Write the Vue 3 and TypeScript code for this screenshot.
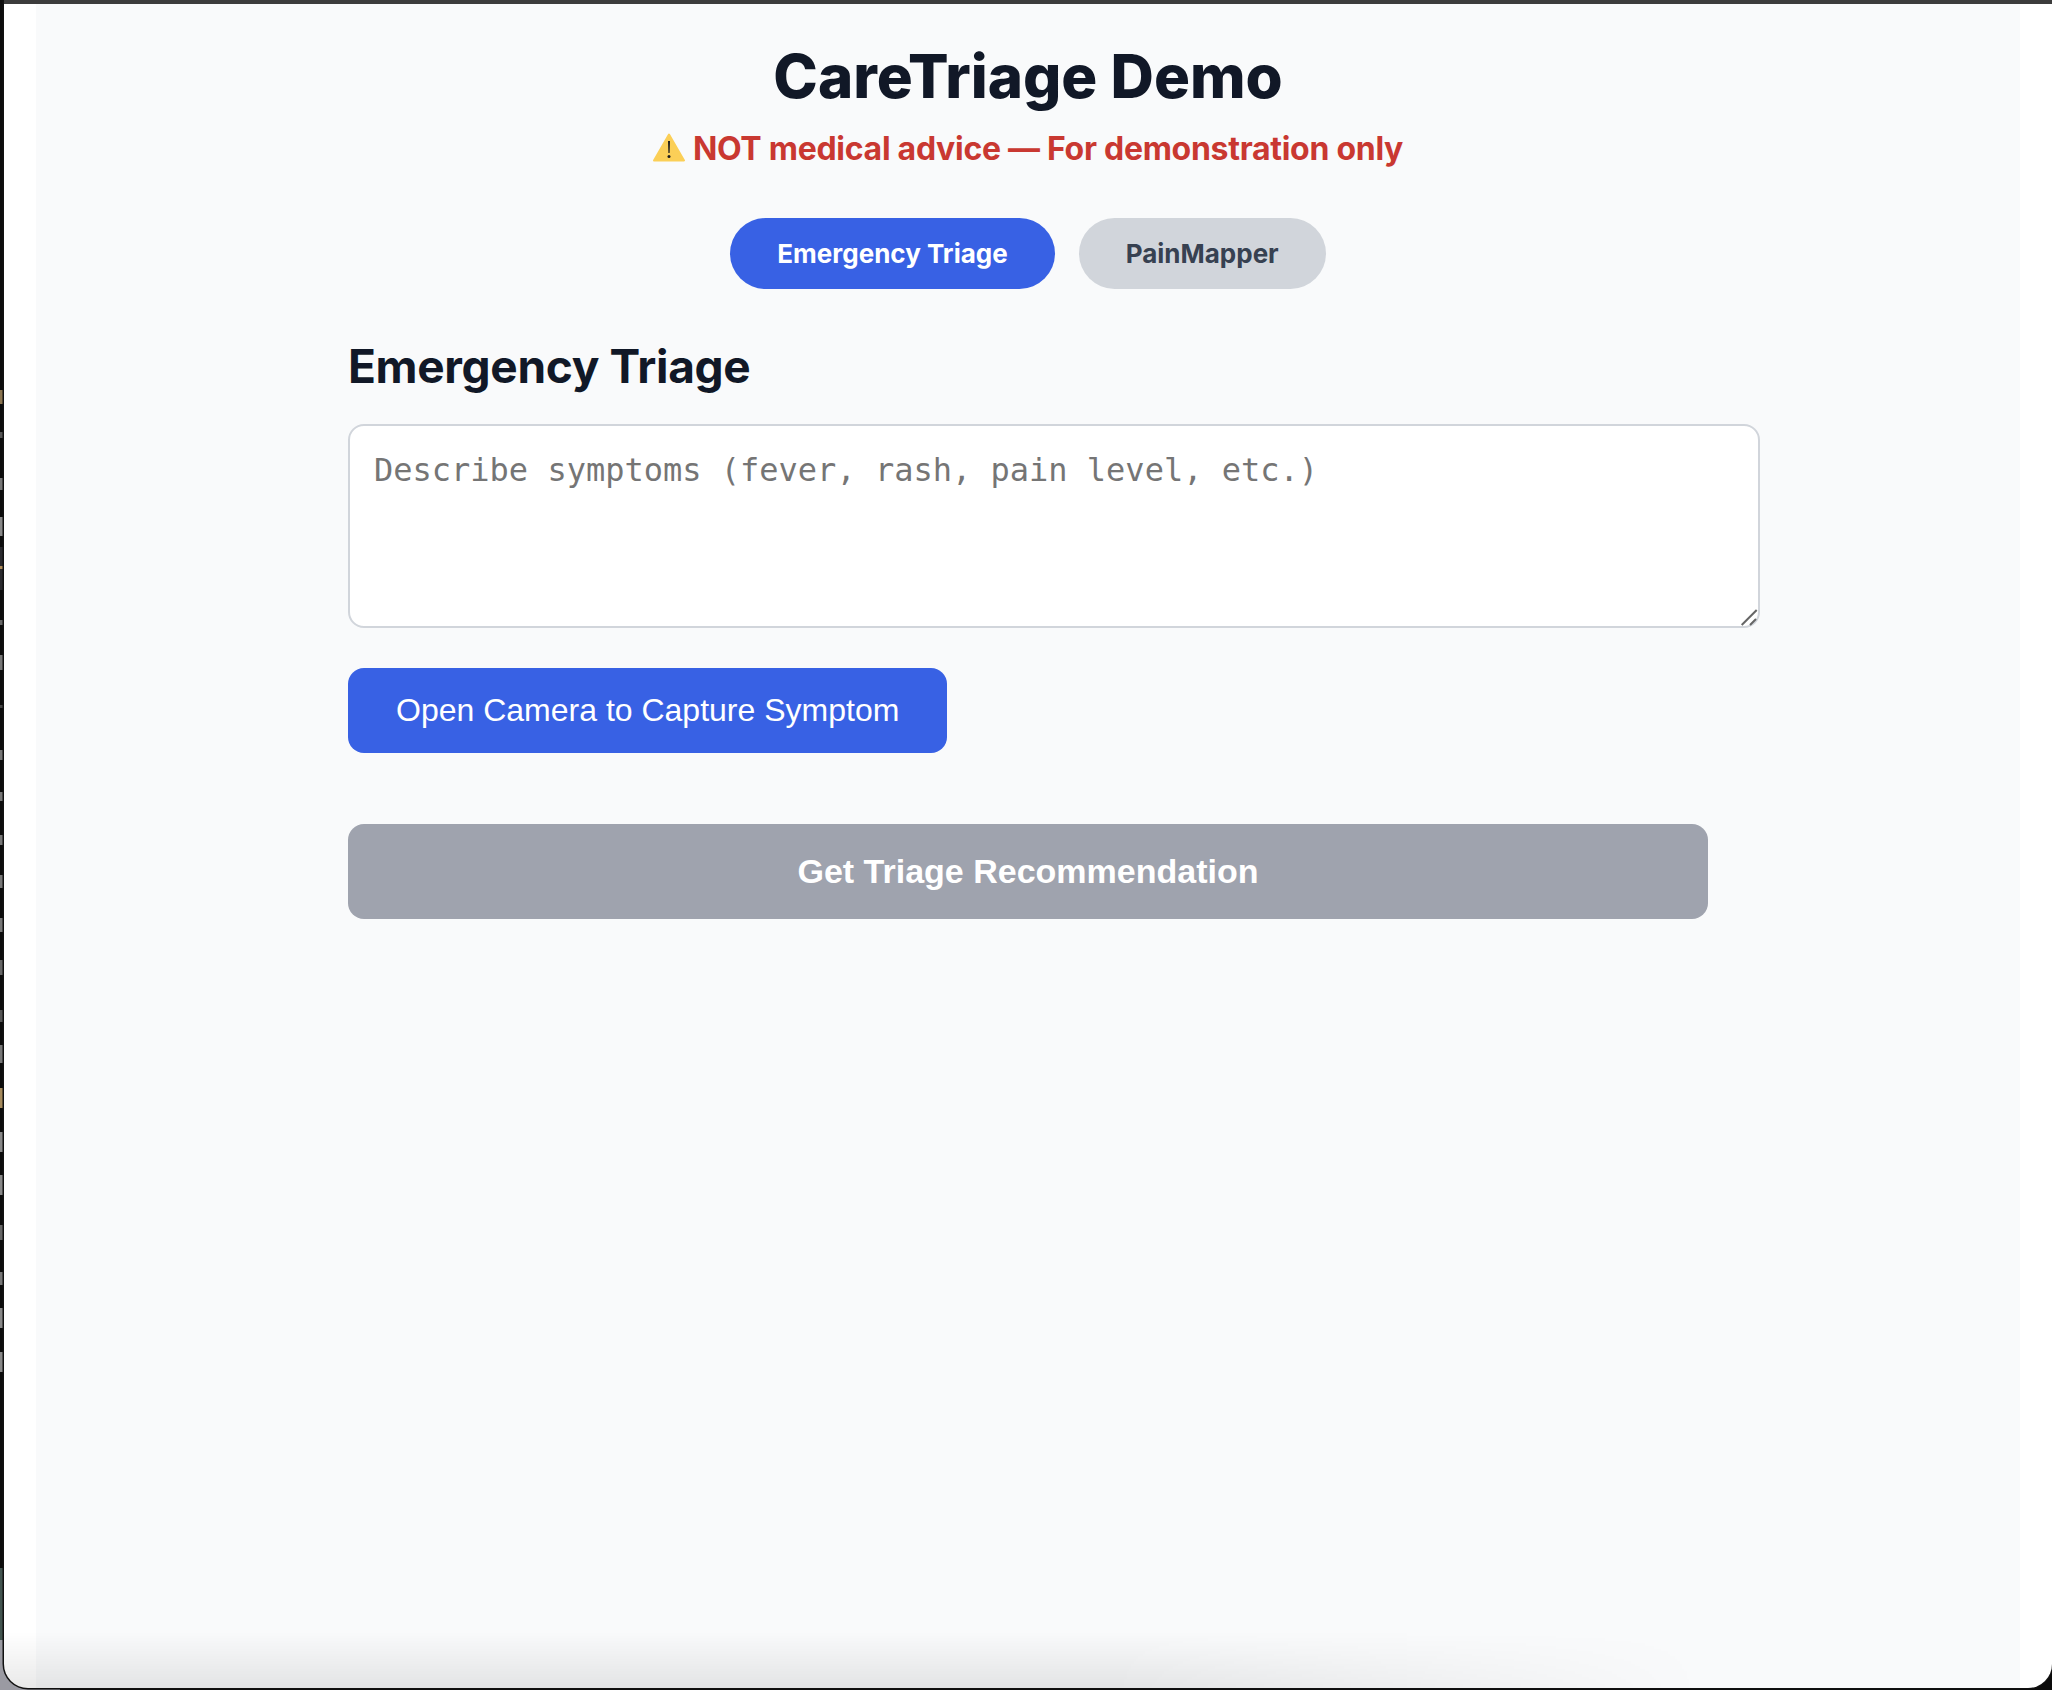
<script setup lang="ts">
import { ref } from 'vue'

type Tab = 'triage' | 'pain'

interface EdgeMark {
  top: number
  height: number
  color: string
}

const activeTab = ref<Tab>('triage')
const symptoms = ref('')

// bits of the desktop showing behind the window's left edge
const edgeMarks: EdgeMark[] = [
  { top: 390, height: 14, color: '#8a7450' },
  { top: 432, height: 6, color: '#555' },
  { top: 478, height: 12, color: '#777' },
  { top: 517, height: 19, color: '#888' },
  { top: 547, height: 43, color: '#2a2a2e' },
  { top: 566, height: 3, color: '#b08d5a' },
  { top: 620, height: 5, color: '#666' },
  { top: 655, height: 15, color: '#777' },
  { top: 705, height: 3, color: '#444' },
  { top: 750, height: 10, color: '#777' },
  { top: 792, height: 9, color: '#777' },
  { top: 835, height: 10, color: '#777' },
  { top: 875, height: 13, color: '#777' },
  { top: 918, height: 14, color: '#777' },
  { top: 960, height: 15, color: '#666' },
  { top: 1010, height: 12, color: '#555' },
  { top: 1045, height: 18, color: '#777' },
  { top: 1088, height: 20, color: '#a58a5c' },
  { top: 1132, height: 20, color: '#888' },
  { top: 1175, height: 20, color: '#888' },
  { top: 1225, height: 15, color: '#666' },
  { top: 1272, height: 13, color: '#777' },
  { top: 1308, height: 20, color: '#888' },
  { top: 1352, height: 20, color: '#888' },
]
</script>

<template>
  <div class="screen">
    <i
      v-for="mark in edgeMarks"
      :key="mark.top"
      class="edge-mark"
      :style="{ top: mark.top + 'px', height: mark.height + 'px', background: mark.color }"
    ></i>
    <div class="window">
      <div class="title-bar"></div>
      <div class="page">
        <div class="app">
          <header class="header">
            <h1>CareTriage Demo</h1>
            <p class="disclaimer">
              <svg class="warn" viewBox="0 0 32 29" width="32" height="29" aria-hidden="true">
                <path d="M16 1.5 L31 27.5 H1 Z" fill="#fbcf57" stroke="#fbcf57" stroke-width="2" stroke-linejoin="round" />
                <path d="M15 8 H17 L16.6 20 H15.4 Z" fill="#1b1b1b" />
                <circle cx="16" cy="23.5" r="1.5" fill="#1b1b1b" />
              </svg>
              <span>NOT medical advice — For demonstration only</span>
            </p>
          </header>

          <nav class="tabs">
            <button class="tab" :class="{ active: activeTab === 'triage' }" @click="activeTab = 'triage'">Emergency Triage</button>
            <button class="tab" :class="{ active: activeTab === 'pain' }" @click="activeTab = 'pain'">PainMapper</button>
          </nav>

          <section class="triage">
            <h2>Emergency Triage</h2>
            <div class="field">
              <textarea v-model="symptoms" class="symptoms" placeholder="Describe symptoms (fever, rash, pain level, etc.)"></textarea>
              <svg class="grip" viewBox="0 0 18 18" width="18" height="18" aria-hidden="true">
                <path d="M16.7 2 L1.7 17 M16 11 L10 17" stroke="#666" stroke-width="2" fill="none" />
              </svg>
            </div>
            <button class="camera-btn">Open Camera to Capture Symptom</button>
            <button class="submit-btn">Get Triage Recommendation</button>
          </section>
        </div>
      </div>
      <div class="bottom-shade"></div>
    </div>
  </div>
</template>

<style>
html,
body {
  margin: 0;
  background: #000;
}
</style>

<style scoped>
.screen {
  position: relative;
  width: 2052px;
  height: 1690px;
  overflow: hidden;
  box-sizing: border-box;
  padding-left: 4px;
  padding-bottom: 2px;
  background:
    linear-gradient(to bottom, #0c0c0c 1568px, #42544f 1568px, #42544f 1640px, #9a9aa2 1640px) left top / 60px 100% no-repeat,
    #0c0c0c;
}

.edge-mark {
  position: absolute;
  left: 0;
  width: 3px;
}

.window {
  position: relative;
  display: flex;
  flex-direction: column;
  height: 100%;
  overflow: hidden;
  background: #fff;
  border-radius: 0 0 24px 24px;
  box-shadow: 0 0 0 1.5px #111;
}

.title-bar {
  flex: none;
  height: 4px;
  background: #3c3c3c;
}

.page {
  flex: 1;
  margin: 0 32px;
  background: #f9fafb;
  font-family: Inter, "Liberation Sans", sans-serif;
}

.app {
  width: 1360px;
  margin: 0 auto;
}

.header {
  text-align: center;
  padding-top: 36px;
}

h1 {
  margin: 0;
  font-size: 60px;
  line-height: 72px;
  font-weight: 800;
  color: #111827;
}

.disclaimer {
  display: flex;
  justify-content: center;
  align-items: center;
  gap: 8px;
  margin: 17px 0 0;
  font-size: 32px;
  line-height: 40px;
  font-weight: 700;
  letter-spacing: -0.28px;
  color: #c93831;
}

.warn {
  flex: none;
  margin-bottom: 4px;
}

.tabs {
  display: flex;
  justify-content: center;
  gap: 24px;
  margin-top: 49px;
}

.tab {
  height: 71px;
  padding: 0 47px;
  border: none;
  border-radius: 36px;
  font-family: Inter, sans-serif;
  font-size: 26px;
  font-weight: 700;
  background: #d1d5db;
  color: #374151;
}

.tab.active {
  background: #3861e4;
  color: #fff;
}

.triage {
  margin-top: 49px;
}

h2 {
  margin: 0 0 30px;
  font-size: 46px;
  line-height: 56px;
  font-weight: 700;
  letter-spacing: -0.33px;
  color: #111827;
}

.field {
  position: relative;
  width: fit-content;
}

.symptoms {
  display: block;
  width: 1360px;
  height: 152px;
  padding: 24px;
  border: 2px solid #d1d5db;
  border-radius: 16px;
  background: #fff;
  resize: none;
  font-family: "DejaVu Sans Mono", monospace;
  font-size: 32px;
  line-height: 40px;
  color: #111827;
}

.symptoms::placeholder {
  color: #757575;
}

.grip {
  position: absolute;
  right: 2px;
  bottom: 2px;
  pointer-events: none;
}

.camera-btn {
  display: block;
  margin-top: 40px;
  height: 85px;
  padding: 0 48px;
  border: none;
  border-radius: 16px;
  background: #3861e4;
  color: #fff;
  font-family: "Liberation Sans", Arial, sans-serif;
  font-size: 32px;
}

.submit-btn {
  display: block;
  width: 100%;
  height: 95px;
  margin-top: 71px;
  border: none;
  border-radius: 16px;
  background: #9fa3ae;
  color: #fff;
  font-family: "Liberation Sans", Arial, sans-serif;
  font-size: 34px;
  font-weight: 700;
}

.bottom-shade {
  position: absolute;
  left: 0;
  width: 1700px;
  bottom: 0;
  height: 56px;
  pointer-events: none;
  background: linear-gradient(to top, rgba(0, 0, 0, 0.085), rgba(0, 0, 0, 0));
  -webkit-mask-image: linear-gradient(to right, #000 65%, transparent 100%);
  mask-image: linear-gradient(to right, #000 65%, transparent 100%);
}
</style>
